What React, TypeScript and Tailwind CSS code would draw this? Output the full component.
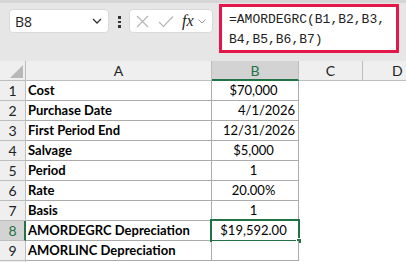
import React from "react";

const rows: { n: number; a: string; b: string; align: "center" | "right" }[] = [
  { n: 1, a: "Cost", b: "$70,000", align: "center" },
  { n: 2, a: "Purchase Date", b: "4/1/2026", align: "right" },
  { n: 3, a: "First Period End", b: "12/31/2026", align: "right" },
  { n: 4, a: "Salvage", b: "$5,000", align: "center" },
  { n: 5, a: "Period", b: "1", align: "center" },
  { n: 6, a: "Rate", b: "20.00%", align: "center" },
  { n: 7, a: "Basis", b: "1", align: "center" },
  { n: 8, a: "AMORDEGRC Depreciation", b: "$19,592.00", align: "center" },
  { n: 9, a: "AMORLINC Depreciation", b: "", align: "center" },
];

export default function App() {
  return (
    <div
      className="w-[406px] h-[262px] overflow-hidden bg-[#e6e6e6] flex flex-col"
      style={{ fontFamily: "Lato, 'Liberation Sans', sans-serif" }}
    >
      <div className="h-[3px] bg-[#d6d6d6] shrink-0" />
      {/* formula bar */}
      <div className="h-[58px] shrink-0 flex items-start pl-[9px]">
        <div className="mt-[6px] w-[100px] h-[24px] bg-white rounded-[4px] border border-[#dadada] flex items-center pl-[5px] pr-[6px]">
          <span className="text-[14px] text-[#222] flex-1" style={{ fontFamily: "'Open Sans', sans-serif" }}>B8</span>
          <svg width="10" height="6" viewBox="0 0 10 6">
            <path d="M1 1 L5 5 L9 1" fill="none" stroke="#333" strokeWidth="1.3" />
          </svg>
        </div>
        <div className="mt-[13px] ml-[9px] w-[3px] flex flex-col gap-[2px]">
          <div className="w-[3px] h-[2.5px] bg-[#333]" />
          <div className="w-[3px] h-[2.5px] bg-[#333]" />
          <div className="w-[3px] h-[2.5px] bg-[#333]" />
        </div>
        <div className="mt-[6px] ml-[8px] w-[84px] h-[24px] bg-white rounded-[4px] border border-[#dadada] flex items-center pl-[6px]">
          <svg width="13" height="13" viewBox="0 0 13 13">
            <path d="M1 1 L12 12 M12 1 L1 12" stroke="#b5b5b5" strokeWidth="1.2" />
          </svg>
          <svg width="16" height="13" viewBox="0 0 16 13" className="ml-[9px]">
            <path d="M1 7 L5.5 11.5 L15 1.5" fill="none" stroke="#b5b5b5" strokeWidth="1.2" />
          </svg>
          <span
            className="ml-[8px] text-[16px] italic text-[#222] leading-none"
            style={{ fontFamily: "'Liberation Serif', serif" }}
          >
            fx
          </span>
          <svg width="8" height="5" viewBox="0 0 8 5" className="ml-[4px]">
            <path d="M0.5 0.5 L4 4 L7.5 0.5" fill="none" stroke="#9a9a9a" strokeWidth="1" />
          </svg>
        </div>
        <div className="mt-[1px] ml-[6px] w-[180px] h-[49px] bg-white border-[3px] border-[#e3174a] pl-[7px] pt-[3px]">
          <div
            className="text-[13px] leading-[20px] text-[#222]"
            style={{ fontFamily: "'Liberation Mono', monospace" }}
          >
            <div>=AMORDEGRC(B1,B2,B3,</div>
            <div>B4,B5,B6,B7)</div>
          </div>
        </div>
      </div>
      {/* header row */}
      <div className="flex h-[20px] shrink-0 text-[14px] text-[#222]">
        <div className="w-[26px] h-[20px] bg-[#efefef] border-r border-b border-[#bdbdbd] relative">
          <svg width="13" height="13" viewBox="0 0 13 13" className="absolute right-[2px] bottom-[2px]">
            <path d="M13 0 L13 13 L0 13 Z" fill="#b8b8b8" />
          </svg>
        </div>
        <div className="w-[186px] h-[20px] bg-[#efefef] border-r border-b border-[#bdbdbd] flex items-center justify-center">A</div>
        <div className="w-[87px] h-[20px] bg-[#d3d3d3] border-r border-[#bdbdbd] border-b-2 border-b-[#217346] flex items-center justify-center text-[#217346]">B</div>
        <div className="w-[64px] h-[20px] bg-[#efefef] border-r border-b border-[#bdbdbd] flex items-center justify-center">C</div>
        <div className="flex-1 h-[20px] bg-[#efefef] border-b border-[#bdbdbd] flex items-center pl-[29px]">D</div>
      </div>
      {rows.map((r) => {
        const sel = r.n === 8;
        return (
          <div key={r.n} className="flex h-[20px] shrink-0 text-[13.5px] text-black">
            <div
              className={
                sel
                  ? "w-[26px] h-[20px] bg-[#d3d3d3] border-b border-[#bdbdbd] border-r-2 border-r-[#217346] flex items-center justify-center text-[#217346] pl-[1px] text-[14px]"
                  : "w-[26px] h-[20px] bg-[#efefef] border-r border-b border-[#bdbdbd] flex items-center justify-center text-[#222] text-[14px]"
              }
            >
              {r.n}
            </div>
            <div className="w-[186px] h-[20px] bg-white border-r border-b border-[#ababab] flex items-center pl-[2px] font-bold whitespace-nowrap text-[13px]">
              {r.a}
            </div>
            <div
              className={
                "w-[87px] h-[20px] bg-white border-r border-b border-[#ababab] flex items-center relative pr-[3px] text-[13px] " +
                (r.align === "right" ? "justify-end" : "justify-center")
              }
            >
              {r.b}
              {sel && (
                <div className="absolute left-[-2px] top-[-2px] w-[90px] h-[23px] border-2 border-[#217346]">
                  <div className="absolute right-[-4px] bottom-[-4px] w-[6px] h-[6px] bg-[#217346] border border-white" />
                </div>
              )}
            </div>
            <div className="flex-1 h-[20px] bg-white" />
          </div>
        );
      })}
      <div className="flex-1 flex">
        <div className="w-[26px] bg-[#efefef] border-r border-[#bdbdbd]" />
        <div className="flex-1 bg-white" />
      </div>
    </div>
  );
}
